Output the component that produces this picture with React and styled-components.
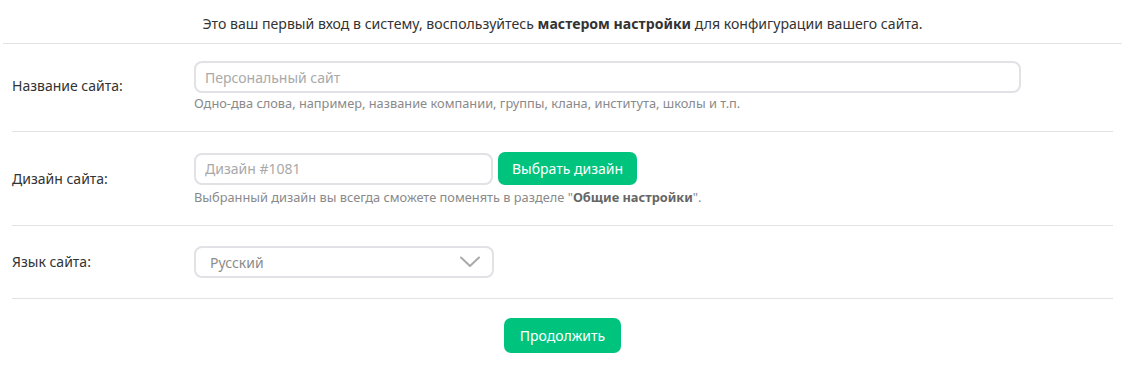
import React from "react";
import styled, { createGlobalStyle } from "styled-components";

const Global = createGlobalStyle`
  html, body { margin: 0; padding: 0; background: #fff; }
  body { font-family: "Noto Sans", "Open Sans", sans-serif; color: #333; }
  * { box-sizing: border-box; }
`;

const Page = styled.div`
  width: 1119px;
  margin-left: 3px;
`;

const Intro = styled.div`
  height: 44px;
  border-bottom: 1px solid #e3e3e3;
  text-align: center;
  font-size: 14.1px;
  line-height: 20px;
  padding-top: 14px;
  color: #333;
  b { font-weight: 700; }
`;

const Form = styled.div`
  padding: 0 9px;
`;

const Row = styled.div`
  display: grid;
  grid-template-columns: 182px 1fr;
  align-items: center;
  padding: ${(p) => (p.$first ? "17px" : "20px")} 0 20px;
  border-bottom: 1px solid #e3e3e3;
`;

const Label = styled.div`
  font-size: 14px;
  line-height: 20px;
  color: #333;
`;

const Control = styled.div`
  display: flex;
  flex-direction: column;
`;

const Line = styled.div`
  display: flex;
  align-items: center;
  gap: 5px;
`;

const Input = styled.input`
  width: ${(p) => p.$w}px;
  height: 32px;
  border: 2px solid #e1e1e6;
  border-radius: 8px;
  padding: 0 9px;
  font-family: inherit;
  font-size: 14px;
  color: #333;
  outline: none;
  &::placeholder { color: #a9a9a9; }
`;

const Hint = styled.div`
  font-size: 12.8px;
  line-height: 16px;
  color: #8a8a8a;
  margin-top: ${(p) => p.$mt || 2}px;
  b { font-weight: 700; color: #666; }
`;

const Button = styled.button`
  height: ${(p) => p.$h || 33}px;
  padding: 0 ${(p) => p.$px || 14}px;
  background: #00c47e;
  color: #fff;
  border: none;
  border-radius: 7px;
  font-family: inherit;
  font-size: 14px;
  cursor: pointer;
`;

const Select = styled.div`
  width: 300px;
  height: 32px;
  border: 2px solid #e1e1e6;
  border-radius: 8px;
  display: flex;
  align-items: center;
  justify-content: space-between;
  padding: 0 12px 0 14px;
  font-size: 14px;
  color: #8c8c8c;
`;

const Footer = styled.div`
  display: flex;
  justify-content: center;
  padding: 19px 0 21px;
`;

export default function App() {
  return (
    <>
      <Global />
      <Page>
        <Intro>
          Это ваш первый вход в систему, воспользуйтесь <b>мастером настройки</b> для конфигурации вашего сайта.
        </Intro>
        <Form>
          <Row $first>
            <Label>Название сайта:</Label>
            <Control>
              <Input $w={827} placeholder="Персональный сайт" />
              <Hint>Одно-два слова, например, название компании, группы, клана, института, школы и т.п.</Hint>
            </Control>
          </Row>
          <Row>
            <Label>Дизайн сайта:</Label>
            <Control>
              <Line>
                <Input $w={299} placeholder="Дизайн #1081" />
                <Button>Выбрать дизайн</Button>
              </Line>
              <Hint $mt={4}>
                Выбранный дизайн вы всегда сможете поменять в разделе "<b>Общие настройки</b>".
              </Hint>
            </Control>
          </Row>
          <Row>
            <Label>Язык сайта:</Label>
            <Control>
              <Select>
                <span>Русский</span>
                <svg width="20" height="12" viewBox="0 0 20 12" fill="none">
                  <path d="M1 1.5L10 10L19 1.5" stroke="#aaa" strokeWidth="2" strokeLinecap="round" strokeLinejoin="round" />
                </svg>
              </Select>
            </Control>
          </Row>
        </Form>
        <Footer>
          <Button $h={35} $px={16}>Продолжить</Button>
        </Footer>
      </Page>
    </>
  );
}
